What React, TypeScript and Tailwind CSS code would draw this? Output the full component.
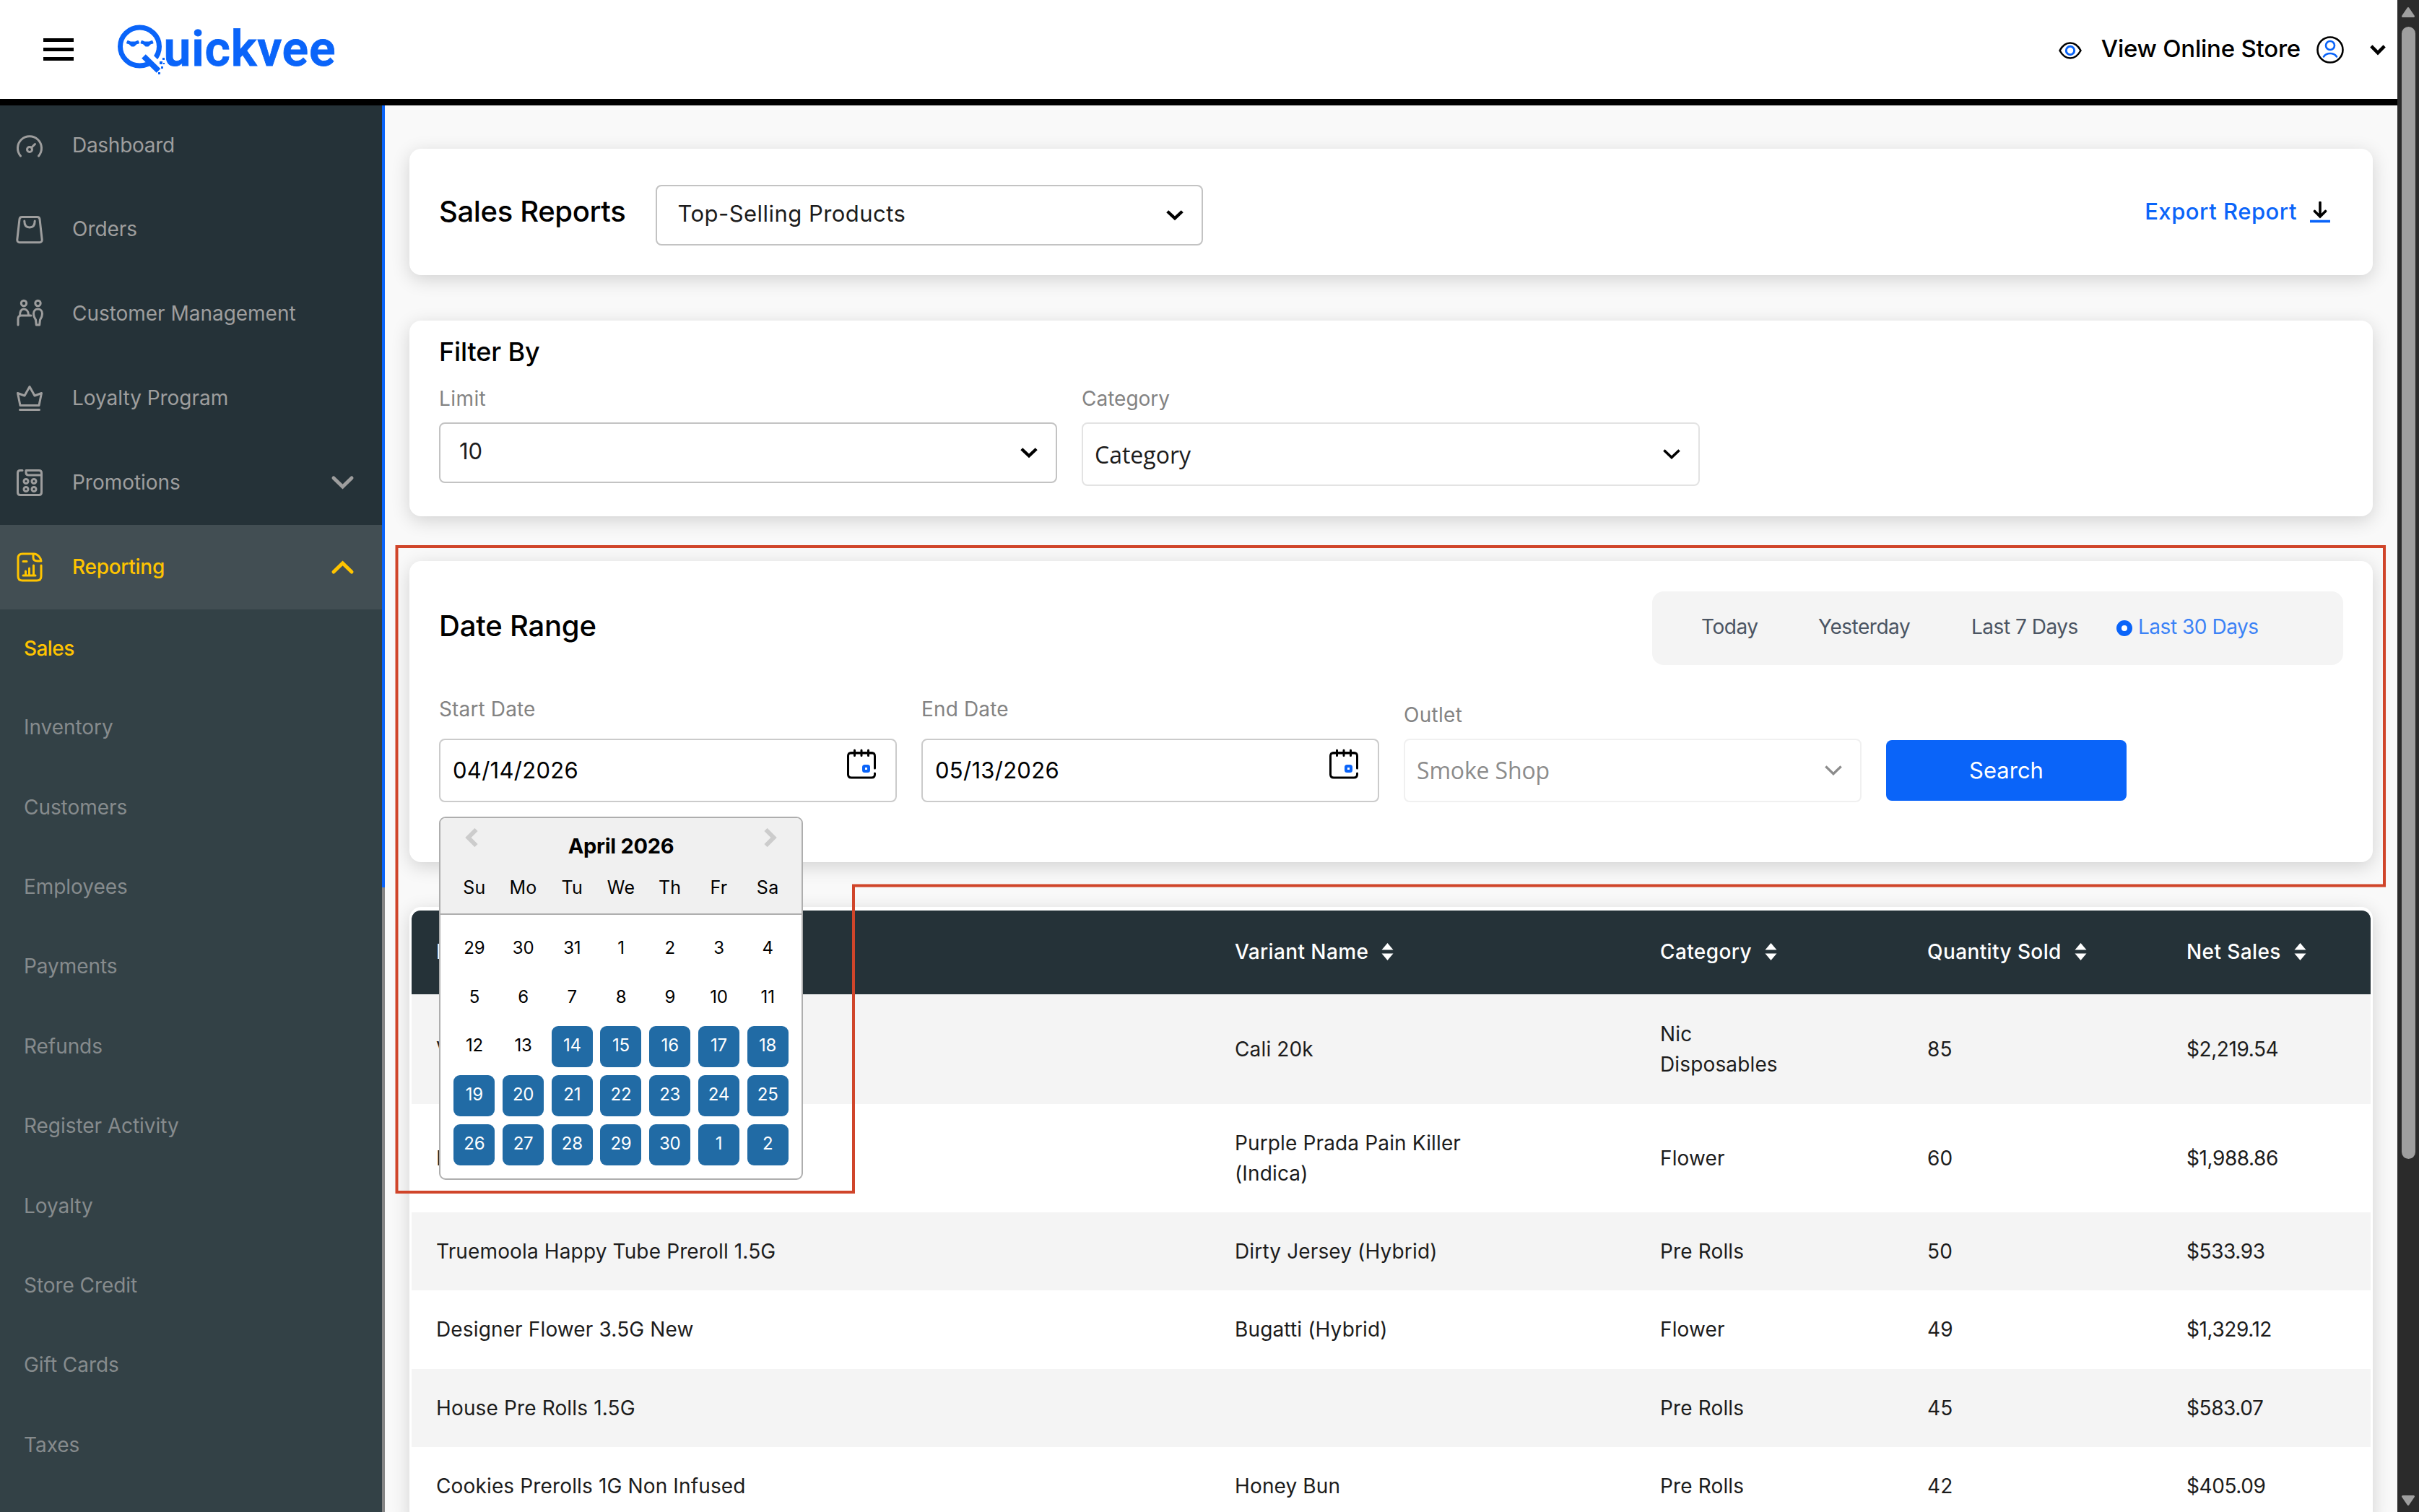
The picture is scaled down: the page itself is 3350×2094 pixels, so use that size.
import React from "react";

const CARD = "rounded-2xl bg-white shadow-[0_6px_26px_rgba(0,0,0,0.16)]";

function Chevron({ className, w = 24, h = 14, sw = 4.4, up = false, cap = "butt" }: { className?: string; w?: number; h?: number; sw?: number; up?: boolean; cap?: "butt" | "round" }) {
  const pad = sw * 0.4;
  const d = up
    ? `M${pad} ${h - pad} L${w / 2} ${pad + 1} L${w - pad} ${h - pad}`
    : `M${pad} ${pad} L${w / 2} ${h - pad - 1} L${w - pad} ${pad}`;
  return (
    <svg className={className} width={w} height={h} viewBox={`0 0 ${w} ${h}`} fill="none" stroke="currentColor" strokeWidth={sw} strokeLinecap={cap} overflow="visible">
      <path d={d} />
    </svg>
  );
}

function Logo() {
  return (
    <svg width="310" height="76" viewBox="0 0 310 76" overflow="visible">
      <ellipse cx="31.5" cy="29.5" rx="27" ry="26.500" fill="none" stroke="#0a64f9" strokeWidth="7" />
      <path d="M15 22l3.500 1.500h7L29 22l1 2.500-3 .8-3.500 3.200h-3L17 25.300l-3-.8zM34.500 22l3.500 1.500h7l3.500-1.500 1 2.500-3 .8-3.500 3.200h-3l-3.500-3.200-3-.8z" fill="#0a64f9" stroke="#0a64f9" strokeWidth="2" strokeLinejoin="round" />
      <path d="M41 40 L62 61" stroke="#fff" strokeWidth="11" />
      <path d="M37 43 L57.500 63" stroke="#0a64f9" strokeWidth="8" />
      <path d="M59 50h4v4h-4zM63 45h3v3h-3zM61 57h3v3h-3zM64 52h2v2h-2zM57 65h3v3h-3z" fill="#0a64f9" />
      <text x="64.500" y="56" fill="#0a64f9" stroke="#0a64f9" strokeWidth="0.800" fontFamily="Roboto" fontWeight="600" fontSize="68" textLength="238" lengthAdjust="spacing">uickvee</text>
    </svg>
  );
}

const ICON = { width: 38, height: 42, viewBox: "0 0 38 42", fill: "none", stroke: "currentColor", strokeWidth: 3, strokeLinecap: "round" as const, strokeLinejoin: "round" as const };

const icons: Record<string, React.ReactNode> = {
  dash: (
    <svg {...ICON}>
      <path d="M6.500 34 A16.500 16.500 0 1 1 31.500 34" />
      <circle cx="19" cy="25" r="3.500" />
      <path d="M21.500 22.500 L26.500 17.500" />
    </svg>
  ),
  orders: (
    <svg {...ICON}>
      <path d="M8.500 3.500h21c2 0 3.300 1.200 3.500 3l3.200 28.500c.2 2-1.200 3.700-3.200 3.700h-28c-2 0-3.400-1.700-3.200-3.700L5 6.500c.2-1.800 1.500-3 3.500-3z" />
      <path d="M11.800 9c0 5.500 2.500 9 7.200 9s7.200-3.500 7.200-9" />
    </svg>
  ),
  people: (
    <svg {...ICON}>
      <circle cx="11" cy="6" r="3.700" />
      <circle cx="30.500" cy="6" r="3.700" />
      <path d="M3 36v-8c0-3.500 1.500-5 4-5h14" />
      <path d="M5.500 23c0-6 2-9 5.500-9s6.500 3 6.500 8" />
      <path d="M30.500 14c-3.500 0-6 2.500-6 6.500 0 4 1.500 6.500 3 8.500l.8 7h4.400l.8-7c1.500-2 3-4.500 3-8.500 0-4-2.500-6.500-6-6.500z" />
    </svg>
  ),
  crown: (
    <svg {...ICON}>
      <path d="M2.500 13.500 L12 17 L19 4.500 L26 17 L35.500 13.500 L32 30.500 H6 Z" />
      <path d="M5.500 36.500h27" />
    </svg>
  ),
  promo: (
    <svg {...ICON}>
      <path d="M9 3.500H6c-2.200 0-3.500 1.300-3.500 3.500v27c0 2.200 1.300 3.500 3.500 3.500h26c2.200 0 3.500-1.300 3.500-3.500V7c0-2.200-1.300-3.500-3.500-3.500H14v3c0 2.500 1 3.500 3.500 3.500h18" />
      <circle cx="14" cy="18.500" r="3" />
      <circle cx="25" cy="18.500" r="3" />
      <circle cx="14" cy="29.500" r="3" />
      <circle cx="25" cy="29.500" r="3" />
    </svg>
  ),
  report: (
    <svg {...ICON}>
      <path d="M35 18v15c0 4-2 6-6 6H9c-4 0-6-2-6-6V8c0-4 2-6 6-6h16c5 0 10 6 10 10h-5c-4 0-6-1.500-6-5V3" />
      <path d="M10 12.500h5M10 32h17M13.500 31v-5M18.500 31v-9M24.500 31v-13" />
    </svg>
  ),
};

const nav = [
  { label: "Dashboard", icon: "dash" },
  { label: "Orders", icon: "orders" },
  { label: "Customer Management", icon: "people" },
  { label: "Loyalty Program", icon: "crown" },
  { label: "Promotions", icon: "promo", arrow: true },
];

const subnav = ["Inventory", "Customers", "Employees", "Payments", "Refunds", "Register Activity", "Loyalty", "Store Credit", "Gift Cards", "Taxes"];

function Sidebar() {
  return (
    <aside className="flex h-[1948px] w-[533px] shrink-0 overflow-hidden bg-[#334146] text-[28px]">
      <div className="w-[529px] shrink-0">
        <div className="bg-[#253238] text-[#9e9e9e]">
          {nav.map((n, i) => (
            <div key={n.label} className={`flex items-center pl-[22px] pr-10 ${i === 0 ? "h-[113px]" : "h-[117px]"}`}>
              {icons[n.icon]}
              <span className={`ml-[40px] ${i === 0 ? "pb-[3px] tracking-[-0.01em]" : "pb-px tracking-[-0.001em]"}`}>{n.label}</span>
              {n.arrow && <Chevron className="ml-auto" w={29} h={17} sw={5} cap="round" />}
            </div>
          ))}
        </div>
        <div className="flex h-[117px] items-center bg-[#424e53] pl-[22px] pr-10 text-[#ffc400]">
          {icons.report}
          <span className="ml-[40px] pb-px font-medium tracking-[-0.01em]">Reporting</span>
          <Chevron className="ml-auto" w={29} h={17} sw={5} up cap="round" />
        </div>
        <div className="flex h-[108px] items-center pb-px pl-[33px] font-medium tracking-[-0.02em] text-[#ffc400]">Sales</div>
        {subnav.map((s) => (
          <div key={s} className="flex h-[110.4px] items-center pl-[33px] tracking-[-0.002em] text-[#868b8d]">{s}</div>
        ))}
      </div>
      <div className="w-1 shrink-0">
        <div className="h-[1083px] bg-[#0a64f9]" />
        <div className="h-[865px] bg-[#858585]" />
      </div>
    </aside>
  );
}

function TopBar() {
  return (
    <header className="flex h-[146px] shrink-0 items-center border-b-[9px] border-black bg-white pl-[60px] pr-4">
      <div className="flex w-[42px] flex-col gap-[7.500px]">
        <div className="h-[5.500px] bg-black" />
        <div className="h-[5.500px] bg-black" />
        <div className="h-[5.500px] bg-black" />
      </div>
      <div className="ml-[60px] mt-[9px]"><Logo /></div>
      <div className="ml-auto flex items-center">
        <svg className="mt-0.5" width="32" height="24" viewBox="0 0 32 24" fill="none" strokeWidth="2.600">
          <path d="M1.500 12C5 5.500 10 1.500 16 1.500S27 5.500 30.500 12C27 18.500 22 22.500 16 22.500S5 18.500 1.500 12z" stroke="#000" strokeLinejoin="round" />
          <circle cx="16" cy="12" r="5.700" stroke="#0a64f9" strokeWidth="3" />
        </svg>
        <span className="ml-[27px] pb-px text-[33px] font-medium tracking-[-0.007em] text-black">View Online Store</span>
        <svg className="ml-[22px]" width="38" height="38" viewBox="0 0 38 38" fill="none" strokeWidth="2.600">
          <circle cx="19" cy="19" r="17.500" stroke="#000" />
          <circle cx="19" cy="13" r="6" stroke="#0a64f9" />
          <path d="M10 28.500c2-3 5-4.500 9-4.500s7 1.500 9 4.500" stroke="#0a64f9" strokeLinecap="round" />
        </svg>
        <Chevron className="ml-9" w={22} h={14} sw={4.6} />
      </div>
    </header>
  );
}

function CalendarIcon() {
  return (
    <svg className="-mt-[18px]" width="42" height="42" viewBox="0 0 42 42" fill="none" stroke="#000" strokeWidth="3" strokeLinecap="round">
      <path d="M39.500 27V10c0-3-1.500-4.500-4.500-4.500H7C4 5.500 2.500 7 2.500 10v25.500c0 3 1.500 4.500 4.500 4.500h28c3 0 4.500-1.500 4.500-4.500V34" />
      <path d="M11.500 2v7.500M21 2v7.500M30.500 2v7.500M6 6h30" />
      <rect x="24" y="24" width="7" height="7" rx="1.500" stroke="#0a64f9" strokeWidth="4" />
    </svg>
  );
}

function DateField({ label, value, children }: { label: string; value: string; children?: React.ReactNode }) {
  return (
    <div className="relative w-[634px]">
      <div className="flex h-10 items-center text-[28px] tracking-[0.005em] text-[#838383]">{label}</div>
      <div className="mt-[21px] flex h-[88px] items-center justify-between rounded-lg border-2 border-[#cbcbcb] pl-[17px] pr-[26px]">
        <span className="text-[31px] tracking-[0.009em] text-black">{value}</span>
        <CalendarIcon />
      </div>
      {children}
    </div>
  );
}

const days = [29, 30, 31, ...Array.from({ length: 30 }, (_, i) => i + 1), 1, 2];

function Calendar() {
  return (
    <div className="absolute left-0 top-[169px] z-10 h-[503px] w-[504px] overflow-hidden rounded-[9px] border-2 border-[#aeaeae] bg-white text-black">
      <div className="h-[134px] border-b-2 border-[#aeaeae] bg-[#f0f0f0]">
        <div className="flex h-[78px] justify-between px-[34px] pt-[14px] text-[#cccccc]">
          <svg width="18" height="26" viewBox="0 0 18 26" fill="none" stroke="currentColor" strokeWidth="6"><path d="M15.500 2 L4.500 13 L15.500 24" /></svg>
          <span className="pt-2 text-[29px] leading-[34px] font-bold tracking-[-0.01em] text-black">April 2026</span>
          <svg width="18" height="26" viewBox="0 0 18 26" fill="none" stroke="currentColor" strokeWidth="6"><path d="M2.500 2 L13.500 13 L2.500 24" /></svg>
        </div>
        <div className="grid grid-cols-7 px-[13px] text-center text-[25px] leading-[36px] tracking-[0.01em]">
          {["Su", "Mo", "Tu", "We", "Th", "Fr", "Sa"].map((d) => <span key={d}>{d}</span>)}
        </div>
      </div>
      <div className="grid grid-cols-7 px-[13px] pt-[13px]">
        {days.map((d, i) => (
          <div key={i} className="flex h-[67.800px] items-center justify-center">
            <div className={`flex size-[57px] items-center justify-center rounded-[9px] text-[24px] tracking-[-0.01em] ${i >= 16 ? "bg-[#216ba5] pb-[3px] text-white" : "pb-0.5"}`}>{d}</div>
          </div>
        ))}
      </div>
    </div>
  );
}

function Sort() {
  return (
    <svg className="ml-[18px]" width="17" height="26" viewBox="0 0 17 26" fill="#fff">
      <path d="M8.500 1 L16.500 10.500 H.5zM8.500 25 L16.500 15.500 H.5z" />
    </svg>
  );
}

const GRID = "grid grid-cols-[1106px_589px_370px_359px_255px] pl-[34px]";

const rows = [
  ["Vape", "Cali 20k", "Nic Disposables", "85", "$2,219.54", "h-[152px]"],
  ["Preroll", "Purple Prada Pain Killer (Indica)", "Flower", "60", "$1,988.86", "h-[150px]"],
  ["Truemoola Happy Tube Preroll 1.5G", "Dirty Jersey (Hybrid)", "Pre Rolls", "50", "$533.93", "h-[108.300px]"],
  ["Designer Flower 3.5G New", "Bugatti (Hybrid)", "Flower", "49", "$1,329.12", "h-[108.300px]"],
  ["House Pre Rolls 1.5G", "", "Pre Rolls", "45", "$583.07", "h-[108.300px]"],
  ["Cookies Prerolls 1G Non Infused", "Honey Bun", "Pre Rolls", "42", "$405.09", "h-[108.300px]"],
];

function ProductTable() {
  return (
    <section className={`mt-[62px] h-[900px] px-[3px] pt-[5px] ${CARD}`}>
      <div className={`${GRID} h-[116px] items-center rounded-t-xl bg-[#253238] pb-0.5 text-[28px] font-medium tracking-[0.014em] text-white`}>
        {["Name", "Variant Name", "Category", "Quantity Sold", "Net Sales"].map((h) => (
          <div key={h} className="flex items-center">{h}{h !== "Name" && <Sort />}</div>
        ))}
      </div>
      {rows.map((r, i) => (
        <div key={i} className={`${GRID} ${r[5]} items-center text-[28px] leading-[42px] tracking-[0.005em] text-[#1c1c1c] ${i % 2 === 0 ? "bg-[#f4f4f4]" : "bg-white"}`}>
          <div>{r[0]}</div>
          <div className="w-[360px]">{r[1]}</div>
          <div className="w-[200px]">{r[2]}</div>
          <div>{r[3]}</div>
          <div className="tracking-[-0.015em]">{r[4]}</div>
        </div>
      ))}
    </section>
  );
}

export default function App() {
  return (
    <div className="relative flex h-[2094px] w-[3350px] overflow-hidden bg-[#f9f9f9] font-['Inter',sans-serif]">
      <div className="flex w-[3320px] shrink-0 flex-col">
        <TopBar />
        <div className="flex">
          <Sidebar />
          <main className="flex h-[1948px] w-[2787px] shrink-0 flex-col px-[34px] pt-[60px]">
            <section className={`flex h-[175px] shrink-0 items-center pl-[41px] pr-[59px] ${CARD}`}>
              <h1 className="pb-0.5 text-[40px] font-medium tracking-[-0.009em] text-black">Sales Reports</h1>
              <div className="ml-[42px] mt-2 flex h-[84px] w-[758px] items-center justify-between rounded-lg border-2 border-[#c3c3c3] pl-7 pr-[25px] text-[31px] tracking-[0.015em] text-[#1c1c1c]">
                <span className="pb-0.5">Top-Selling Products</span>
                <Chevron className="text-black" />
              </div>
              <div className="ml-auto flex items-center text-[31px] font-medium tracking-[0.017em] text-[#0a64f9]">
                <span>Export Report</span>
                <svg className="ml-[18px]" width="28" height="30" viewBox="0 0 28 30" fill="none">
                  <path d="M14 1.500V20M6.500 13.500L14 21L21.500 13.500" stroke="#000" strokeWidth="3.600" strokeLinecap="round" />
                  <path d="M0 27.500H28" stroke="#0a64f9" strokeWidth="3.600" />
                </svg>
              </div>
            </section>

            <section className={`mt-[63px] h-[271px] shrink-0 px-[41px] pt-[21px] ${CARD}`}>
              <h2 className="flex h-11 items-center text-[36px] font-medium tracking-[-0.004em] text-black">Filter By</h2>
              <div className="mt-[23px] flex gap-[34px]">
                <div className="w-[856px]">
                  <div className="flex h-10 items-center text-[28px] tracking-[0.015em] text-[#838383]">Limit</div>
                  <div className="mt-[13px] flex h-[84px] items-center justify-between rounded-lg border-2 border-[#c3c3c3] pl-[26px] pr-[25px] text-[31px] text-[#1c1c1c]">
                    <span className="pb-1">10</span>
                    <Chevron className="text-black" />
                  </div>
                </div>
                <div className="w-[856px]">
                  <div className="flex h-10 items-center text-[28px] text-[#838383]">Category</div>
                  <div className="mt-[13px] flex h-[88px] items-center justify-between rounded-lg border-2 border-[#e3e3e3] pl-4 pr-[25px] font-['Open_Sans',sans-serif] text-[32px] text-[#1c1c1c]">
                    <span className="pt-0.5">Category</span>
                    <Chevron className="text-black" sw={3.6} />
                  </div>
                </div>
              </div>
            </section>

            <section className={`mt-[62px] h-[417px] shrink-0 px-[41px] pt-[42px] ${CARD}`}>
              <div className="flex h-[102px] items-center justify-between">
                <h2 className="pb-1.5 text-[40px] font-medium tracking-[-0.005em] text-black">Date Range</h2>
                <div className="flex h-[102px] w-[957px] items-center rounded-2xl bg-[#f4f4f4] pb-1 pl-[68px] text-[28px] tracking-[-0.017em] text-[#4b5563]">
                  <span className="w-[162px]">Today</span>
                  <span className="w-[212px]">Yesterday</span>
                  <span className="w-[201px]">Last 7 Days</span>
                  <div className="mt-1 size-[22px] rounded-full border-[7px] border-[#0a64f9] bg-white" />
                  <span className="ml-2 text-[#3b82f6]">Last 30 Days</span>
                </div>
              </div>
              <div className="mt-[41px] flex gap-[34px]">
                <DateField label="Start Date" value="04/14/2026"><Calendar /></DateField>
                <DateField label="End Date" value="05/13/2026" />
                <div className="w-[634px]">
                  <div className="flex h-14 items-center text-[28px] tracking-[0.01em] text-[#838383]">Outlet</div>
                  <div className="mt-[5px] flex h-[88px] items-center justify-between rounded-lg border-2 border-[#f0f0f0] pl-4 pr-[25px] font-['Open_Sans',sans-serif] text-[32px] tracking-[-0.005em] text-[#8c8c8c]">
                    <span>Smoke Shop</span>
                    <Chevron sw={3.4} />
                  </div>
                </div>
                <button className="mt-[63px] flex h-[84px] w-[333px] items-center justify-center rounded-lg bg-[#0a64f9] text-[31px] text-white">Search</button>
              </div>
            </section>

            <ProductTable />
          </main>
        </div>
      </div>

      <div className="flex w-[30px] flex-col items-center bg-[#2b2b2b] pt-[9px]">
        <svg width="20" height="16" viewBox="0 0 20 16"><path d="M10 2.500 L17.500 13.500 H2.500z" fill="#9f9f9f" stroke="#9f9f9f" strokeWidth="3" strokeLinejoin="round" /></svg>
        <div className="mt-3 h-[1568px] w-[19px] rounded-full bg-[#9f9f9f]" />
        <svg className="mb-2 mt-auto" width="20" height="16" viewBox="0 0 20 16"><path d="M10 13.500 L17.500 2.500 H2.500z" fill="#9f9f9f" stroke="#9f9f9f" strokeWidth="3" strokeLinejoin="round" /></svg>
      </div>

      <svg className="pointer-events-none absolute left-0 top-0 z-20" width="3350" height="2094" fill="none">
        <path d="M549.500 757H3302V1226.500H1182V1651H549.500z" stroke="#d0452a" strokeWidth="4" />
      </svg>
    </div>
  );
}
